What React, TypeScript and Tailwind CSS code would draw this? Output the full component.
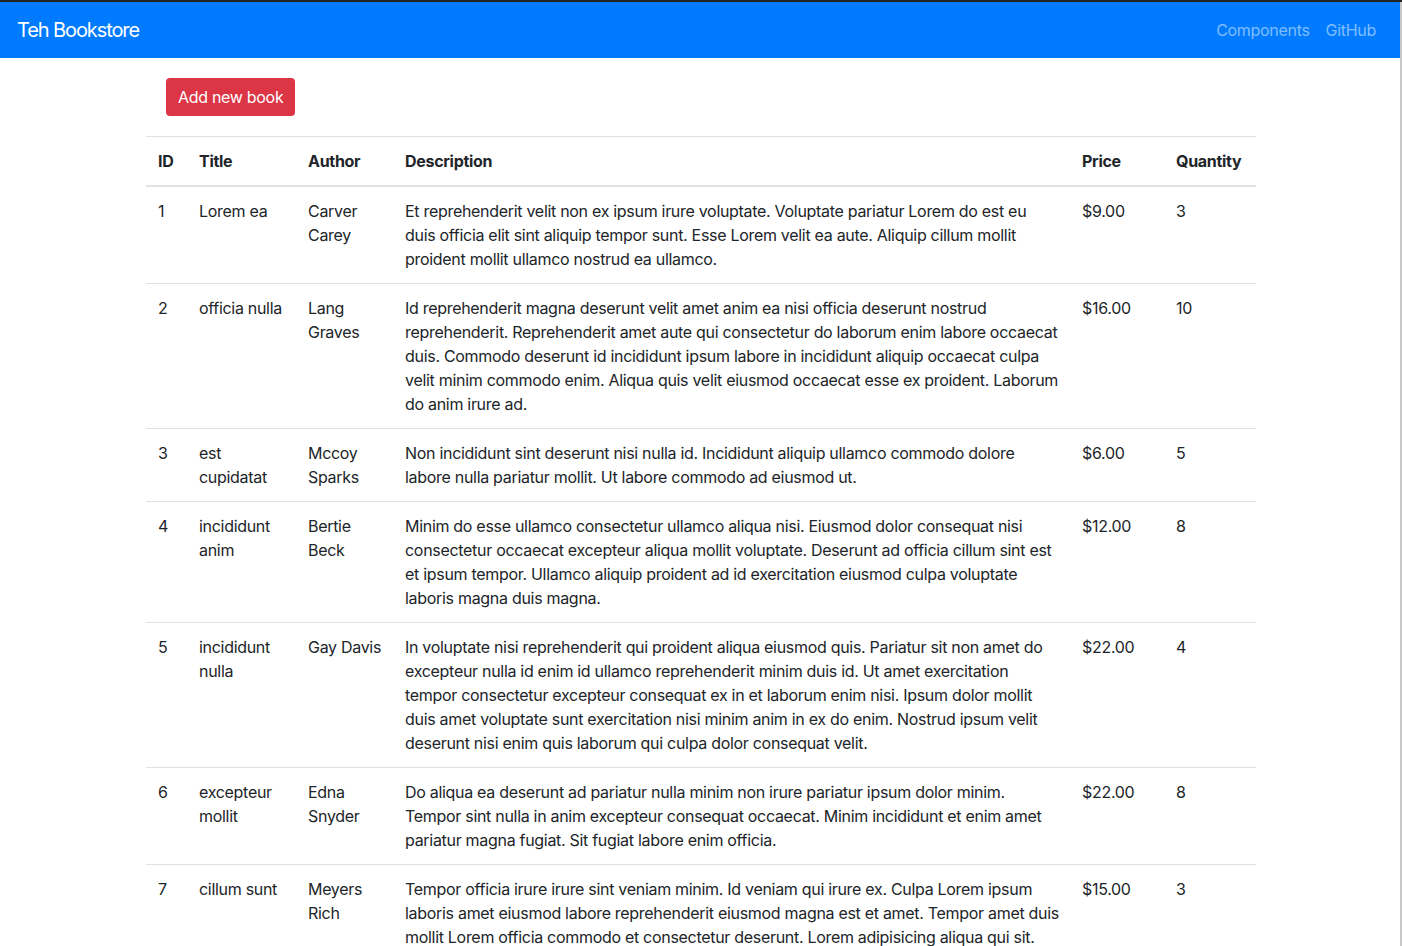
import React from "react";

type Book = {
  id: number;
  title: string[];
  author: string[];
  desc: string[];
  price: string;
  qty: number;
};

const books: Book[] = [
  {
    id: 1,
    title: ["Lorem ea"],
    author: ["Carver", "Carey"],
    desc: [
      "Et reprehenderit velit non ex ipsum irure voluptate. Voluptate pariatur Lorem do est eu",
      "duis officia elit sint aliquip tempor sunt. Esse Lorem velit ea aute. Aliquip cillum mollit",
      "proident mollit ullamco nostrud ea ullamco.",
    ],
    price: "$9.00",
    qty: 3,
  },
  {
    id: 2,
    title: ["officia nulla"],
    author: ["Lang", "Graves"],
    desc: [
      "Id reprehenderit magna deserunt velit amet anim ea nisi officia deserunt nostrud",
      "reprehenderit. Reprehenderit amet aute qui consectetur do laborum enim labore occaecat",
      "duis. Commodo deserunt id incididunt ipsum labore in incididunt aliquip occaecat culpa",
      "velit minim commodo enim. Aliqua quis velit eiusmod occaecat esse ex proident. Laborum",
      "do anim irure ad.",
    ],
    price: "$16.00",
    qty: 10,
  },
  {
    id: 3,
    title: ["est", "cupidatat"],
    author: ["Mccoy", "Sparks"],
    desc: [
      "Non incididunt sint deserunt nisi nulla id. Incididunt aliquip ullamco commodo dolore",
      "labore nulla pariatur mollit. Ut labore commodo ad eiusmod ut.",
    ],
    price: "$6.00",
    qty: 5,
  },
  {
    id: 4,
    title: ["incididunt", "anim"],
    author: ["Bertie", "Beck"],
    desc: [
      "Minim do esse ullamco consectetur ullamco aliqua nisi. Eiusmod dolor consequat nisi",
      "consectetur occaecat excepteur aliqua mollit voluptate. Deserunt ad officia cillum sint est",
      "et ipsum tempor. Ullamco aliquip proident ad id exercitation eiusmod culpa voluptate",
      "laboris magna duis magna.",
    ],
    price: "$12.00",
    qty: 8,
  },
  {
    id: 5,
    title: ["incididunt", "nulla"],
    author: ["Gay Davis"],
    desc: [
      "In voluptate nisi reprehenderit qui proident aliqua eiusmod quis. Pariatur sit non amet do",
      "excepteur nulla id enim id ullamco reprehenderit minim duis id. Ut amet exercitation",
      "tempor consectetur excepteur consequat ex in et laborum enim nisi. Ipsum dolor mollit",
      "duis amet voluptate sunt exercitation nisi minim anim in ex do enim. Nostrud ipsum velit",
      "deserunt nisi enim quis laborum qui culpa dolor consequat velit.",
    ],
    price: "$22.00",
    qty: 4,
  },
  {
    id: 6,
    title: ["excepteur", "mollit"],
    author: ["Edna", "Snyder"],
    desc: [
      "Do aliqua ea deserunt ad pariatur nulla minim non irure pariatur ipsum dolor minim.",
      "Tempor sint nulla in anim excepteur consequat occaecat. Minim incididunt et enim amet",
      "pariatur magna fugiat. Sit fugiat labore enim officia.",
    ],
    price: "$22.00",
    qty: 8,
  },
  {
    id: 7,
    title: ["cillum sunt"],
    author: ["Meyers", "Rich"],
    desc: [
      "Tempor officia irure irure sint veniam minim. Id veniam qui irure ex. Culpa Lorem ipsum",
      "laboris amet eiusmod labore reprehenderit eiusmod magna est et amet. Tempor amet duis",
      "mollit Lorem officia commodo et consectetur deserunt. Lorem adipisicing aliqua qui sit.",
    ],
    price: "$15.00",
    qty: 3,
  },
];

function Lines({ lines }: { lines: string[] }) {
  return (
    <>
      {lines.map((l, i) => (
        <span key={i} className="block whitespace-nowrap">
          {l}
        </span>
      ))}
    </>
  );
}

export default function App() {
  return (
    <div
      className="min-h-[946px] bg-white text-[#212529] text-[16px] leading-[24px] tracking-[-0.3px] border-t-2 border-t-[#222] shadow-[inset_-2px_0_0_#c8c8c8]"
      style={{ fontFamily: "Inter, 'Noto Sans', sans-serif" }}
    >
      <nav className="mr-[2px] flex h-[56px] items-center justify-between bg-[#007bff] px-[16px]">
        <a className="pl-[1px] text-[20px] leading-[30px] tracking-[-1.1px] text-white">Teh Bookstore</a>
        <div className="flex items-center">
          <a className="px-[8px] text-white/50">Components</a>
          <a className="px-[8px] text-white/50">GitHub</a>
        </div>
      </nav>
      <div className="mx-auto w-[1110px]">
        <div className="p-[20px]">
          <button className="h-[38px] rounded-[4px] bg-[#dc3545] px-[12px] text-white">
            Add new book
          </button>
        </div>
        <table className="w-[1110px] table-fixed border-collapse">
          <colgroup>
            <col className="w-[41px]" />
            <col className="w-[109px]" />
            <col className="w-[97px]" />
            <col className="w-[677px]" />
            <col className="w-[94px]" />
            <col className="w-[92px]" />
          </colgroup>
          <thead>
            <tr className="border-t border-[#dee2e6] border-b-2">
              {["ID", "Title", "Author", "Description", "Price", "Quantity"].map((h) => (
                <th key={h} className="p-[12px] text-left font-bold align-bottom whitespace-nowrap">
                  {h}
                </th>
              ))}
            </tr>
          </thead>
          <tbody>
            {books.map((b) => (
              <tr key={b.id} className="border-t border-[#dee2e6] first:border-t-0">
                <td className="p-[12px] align-top">{b.id}</td>
                <td className="p-[12px] align-top">
                  <Lines lines={b.title} />
                </td>
                <td className="p-[12px] align-top">
                  <Lines lines={b.author} />
                </td>
                <td className="p-[12px] align-top">
                  <Lines lines={b.desc} />
                </td>
                <td className="p-[12px] align-top">{b.price}</td>
                <td className="p-[12px] align-top">{b.qty}</td>
              </tr>
            ))}
          </tbody>
        </table>
      </div>
    </div>
  );
}
